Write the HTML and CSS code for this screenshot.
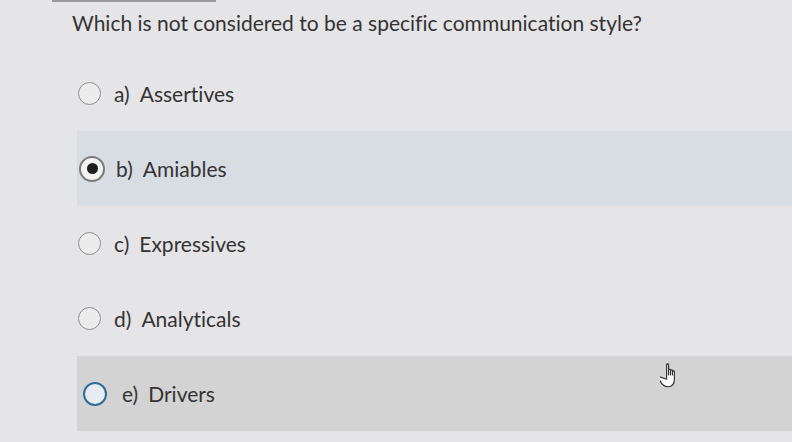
FILE: index.html
```html
<!DOCTYPE html>
<html>
<head>
<meta charset="utf-8">
<link rel="stylesheet" href="styles.css">
</head>
<body>
<div class="page">
  <div class="topline"></div>
  <h1 class="question">Which is not considered to be a specific communication style?</h1>
  <ul class="options">
    <li class="option"><span class="radio"></span><span class="letter">a)</span><span class="label">Assertives</span></li>
    <li class="option selected"><span class="radio checked"></span><span class="letter">b)</span><span class="label">Amiables</span></li>
    <li class="option"><span class="radio"></span><span class="letter">c)</span><span class="label">Expressives</span></li>
    <li class="option"><span class="radio"></span><span class="letter">d)</span><span class="label">Analyticals</span></li>
    <li class="option hover"><span class="radio focus"></span><span class="letter">e)</span><span class="label">Drivers</span>
      <svg class="cursor" width="24" height="28" viewBox="0 0 22 26"><path d="M6 2.5c0-1 1.8-1 1.8 0V12V7.5c0-1 1.8-1 1.8 0V12V8c0-1 1.8-1 1.8 0v4V9c0-1 1.8-1 1.8 0v7c0 4-2 7-6 7s-5.5-2-7-5l-1.6-3c-.5-1 .8-1.8 1.6-1L6 16z" fill="#fff" stroke="#333" stroke-width="1.1" stroke-linejoin="round"/></svg>
    </li>
  </ul>
</div>
</body>
</html>
```
FILE: styles.css
```css
html, body {
  margin: 0;
  padding: 0;
}
body {
  background: #e5e4e6;
  font-family: Lato, "Open Sans", sans-serif;
  font-variant-ligatures: none;
  color: #353535;
  width: 792px;
  height: 442px;
  overflow: hidden;
}
.topline {
  margin-left: 52px;
  width: 164px;
  height: 2px;
  background: #9a9a9a;
}
.question {
  margin: 8px 0 0 72px;
  font-size: 21px;
  font-weight: 400;
  line-height: 26px;
  color: #333;
}
.options {
  list-style: none;
  margin: 20px 0 0 77px;
  padding: 0;
}
.option {
  height: 75px;
  display: flex;
  align-items: center;
  padding-left: 1px;
  font-size: 21px;
  position: relative;
}
.option.selected {
  background: #d8dde3;
}
.option.hover {
  background: #d3d3d3;
}
.radio {
  width: 23px;
  height: 23px;
  border: 1.5px solid #8e8e8e;
  border-radius: 50%;
  background: #ececec;
  box-sizing: border-box;
  flex: none;
  display: flex;
  align-items: center;
  justify-content: center;
  margin-right: 13px;
}
.radio.checked {
  width: 26px;
  height: 26px;
  border: 2px solid #7a7a7a;
  background: #f2f2f2;
  margin-left: 1px;
  margin-right: 11px;
}
.radio.checked::after {
  content: "";
  width: 11px;
  height: 11px;
  border-radius: 50%;
  background: #1e1e1e;
}
.radio.focus {
  width: 24px;
  height: 24px;
  border: 2.5px solid #2d6f9a;
  background: #e6ecf2;
  margin-left: 5px;
  margin-right: 15px;
}
.letter {
  margin-right: 10px;
}
.label {
  color: #333;
}
.cursor {
  position: absolute;
  left: 583px;
  top: 6px;
}
```
